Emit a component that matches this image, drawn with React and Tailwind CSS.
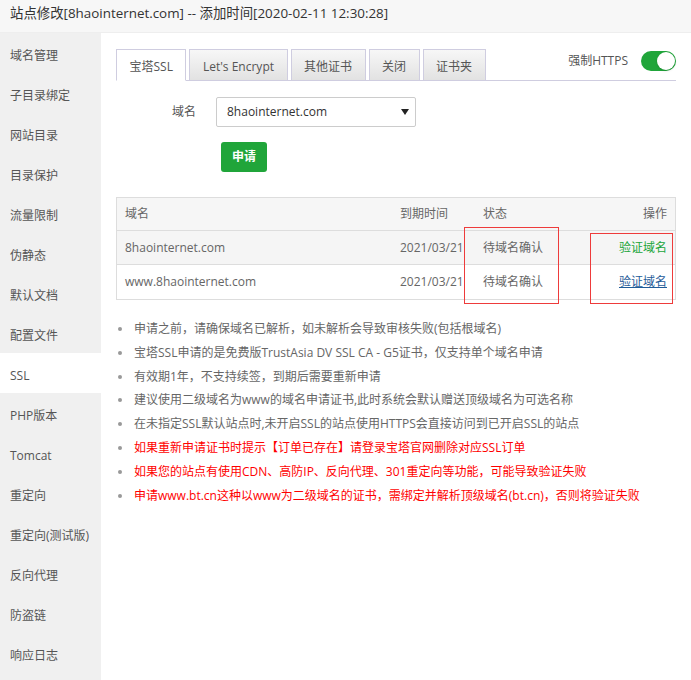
import React from "react";

const menu = [
  "域名管理", "子目录绑定", "网站目录", "目录保护", "流量限制", "伪静态", "默认文档", "配置文件",
  "SSL", "PHP版本", "Tomcat", "重定向", "重定向(测试版)", "反向代理", "防盗链", "响应日志",
];

const tabs = ["宝塔SSL", "Let's Encrypt", "其他证书", "关闭", "证书夹"];

const tips = [
  { text: "申请之前，请确保域名已解析，如未解析会导致审核失败(包括根域名)" },
  { text: "宝塔SSL申请的是免费版TrustAsia DV SSL CA - G5证书，仅支持单个域名申请" },
  { text: "有效期1年，不支持续签，到期后需要重新申请" },
  { text: "建议使用二级域名为www的域名申请证书,此时系统会默认赠送顶级域名为可选名称" },
  { text: "在未指定SSL默认站点时,未开启SSL的站点使用HTTPS会直接访问到已开启SSL的站点" },
  { text: "如果重新申请证书时提示【订单已存在】请登录宝塔官网删除对应SSL订单", red: true },
  { text: "如果您的站点有使用CDN、高防IP、反向代理、301重定向等功能，可能导致验证失败", red: true },
  { text: "申请www.bt.cn这种以www为二级域名的证书，需绑定并解析顶级域名(bt.cn)，否则将验证失败", red: true },
];

const rows = [
  { domain: "8haointernet.com", date: "2021/03/21", status: "待域名确认", bg: "bg-[#f5f5f5]", link: "text-[#20a53a]" },
  { domain: "www.8haointernet.com", date: "2021/03/21", status: "待域名确认", bg: "bg-white", link: "text-[#1f5c99] underline" },
];

export default function App() {
  return (
    <div
      className="w-[691px] min-h-[680px] bg-white flex flex-col"
      style={{ fontFamily: '"Open Sans", "Noto Sans CJK SC", sans-serif' }}
    >
      {/* 标题栏 */}
      <div className="h-[33px] bg-[#f7f7f7] border-b border-[#eeeeee] flex items-center pl-[10px] pb-[5px] text-[13.4px] text-[#333]">
        站点修改[8haointernet.com] -- 添加时间[2020-02-11 12:30:28]
      </div>

      <div className="flex flex-1">
        {/* 左侧菜单 */}
        <div className="w-[101px] bg-[#f0f0f0] shrink-0">
          {menu.map(m => (
            <div
              key={m}
              className={`h-[40px] flex items-center pl-[10px] pt-[5px] text-[12px] text-[#555] ${m === "SSL" ? "bg-white" : ""}`}
            >
              {m}
            </div>
          ))}
        </div>

        {/* 内容 */}
        <div className="flex-1 pl-[15px] pr-[15px] pt-[16px]">
          <div className="flex justify-between border-b border-[#cfcde0]">
            <div className="flex gap-[3px]">
              {tabs.map((t, i) => (
                <div
                  key={t}
                  className={`h-[32px] px-[12.5px] pt-[3px] flex items-center text-[12px] text-[#555] border border-[#cfcde0] -mb-px ${
                    i === 0 ? "bg-white border-b-white" : "bg-gradient-to-b from-[#f7f7f7] to-[#e2e2e2]"
                  }`}
                >
                  {t}
                </div>
              ))}
            </div>
            <div className="flex items-center gap-[13px] self-start mt-[2px]">
              <span className="text-[12px] text-[#555]">强制HTTPS</span>
              <div className="w-[35px] h-[20px] rounded-full bg-[#20a53a] flex items-center justify-end pr-[1px]">
                <div className="w-[18px] h-[18px] rounded-full bg-white shadow-sm" />
              </div>
            </div>
          </div>

          <div className="flex items-center mt-[16px]">
            <div className="w-[80px] text-right text-[12px] text-[#555]">域名</div>
            <div className="ml-[20px] w-[200px] h-[30px] border border-[#cccccc] rounded-[2px] flex items-center justify-between pl-[10px] pr-[6px] text-[12px] text-[#333]">
              <span>8haointernet.com</span>
              <svg width="8" height="6" viewBox="0 0 8 6">
                <polygon points="0,0 8,0 4,6" fill="#222" />
              </svg>
            </div>
          </div>

          <div className="mt-[15px] pl-[105px]">
            <button className="w-[46px] h-[30px] rounded-[3px] bg-[#20a53a] text-white text-[12px] font-bold">
              申请
            </button>
          </div>

          {/* 表格 */}
          <div className="relative mt-[25px] border border-[#dddddd] text-[12px] text-[#666]">
            <div className="grid grid-cols-[275px_83px_100px_1fr] h-[33px] items-center bg-[#f6f6f6] border-b border-[#dddddd]">
              <div className="pl-[8px]">域名</div>
              <div className="pl-[8px]">到期时间</div>
              <div className="pl-[8px]">状态</div>
              <div className="pr-[8px] text-right">操作</div>
            </div>
            {rows.map((r, i) => (
              <div
                key={r.domain}
                className={`grid grid-cols-[275px_83px_100px_1fr] h-[34px] items-center ${r.bg} ${i === 0 ? "border-b border-[#dddddd]" : ""}`}
              >
                <div className="pl-[8px]">{r.domain}</div>
                <div className="pl-[8px]">{r.date}</div>
                <div className="pl-[8px]">{r.status}</div>
                <div className={`pr-[8px] text-right ${r.link}`}>验证域名</div>
              </div>
            ))}
            {/* 标注框 */}
            <div className="absolute left-[347px] top-[29px] w-[95px] h-[77px] border border-[#ee3b3b]" />
            <div className="absolute left-[473px] top-[35px] w-[83px] h-[71px] border border-[#ee3b3b]" />
          </div>

          {/* 提示 */}
          <ul className="mt-[17px] text-[12px]">
            {tips.map(t => (
              <li key={t.text} className="flex items-center h-[23.85px]">
                <span className="w-[4px] h-[4px] rounded-full bg-[#999] ml-[2px] mr-[12px] shrink-0" />
                <span className={t.red ? "text-[#ff0000]" : "text-[#666]"}>{t.text}</span>
              </li>
            ))}
          </ul>
        </div>
      </div>
    </div>
  );
}
